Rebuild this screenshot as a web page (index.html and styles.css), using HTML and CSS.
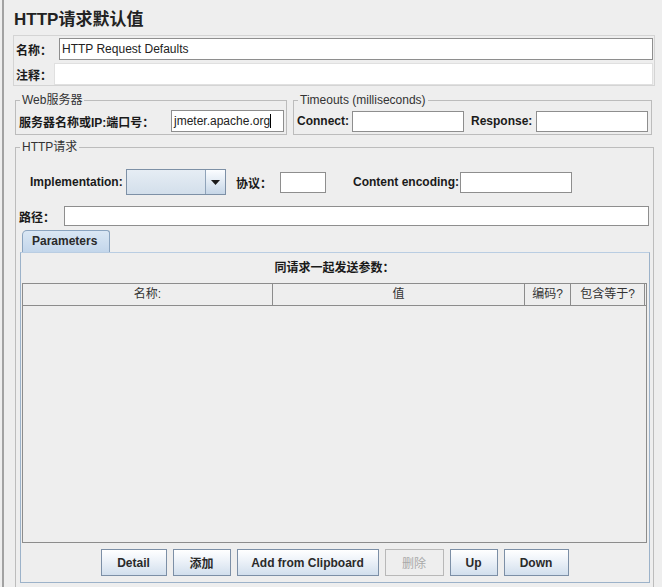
FILE: index.html
```html
<!DOCTYPE html>
<html>
<head>
<meta charset="utf-8">
<title>HTTP请求默认值</title>
<link rel="stylesheet" href="styles.css">
</head>
<body>
<div class="page">
  <h1 class="title">HTTP请求默认值</h1>
  <div class="namebox">
    <div class="row row-name"><span class="lbl lbl-name">名称：</span><div class="field grow">HTTP Request Defaults</div></div>
    <div class="row row-comment"><span class="lbl lbl-comment">注释：</span><div class="field field-flat grow"></div></div>
  </div>
  <div class="servers">
    <fieldset class="group group-web">
      <legend>Web服务器</legend>
      <div class="row row-field"><span class="lbl lbl-server">服务器名称或IP:端口号：</span><div class="field field-server"><span class="caret">jmeter.apache.org</span></div></div>
    </fieldset>
    <fieldset class="group group-timeouts">
      <legend>Timeouts (milliseconds)</legend>
      <div class="row row-field"><span class="lbl lbl-connect">Connect:</span><div class="field field-time"></div><span class="lbl lbl-response">Response:</span><div class="field field-time"></div></div>
    </fieldset>
  </div>
  <fieldset class="group group-http">
    <legend>HTTP请求</legend>
    <div class="row row-impl">
      <span class="lbl lbl-impl">Implementation:</span>
      <div class="combo"><div class="combo-value"></div><div class="combo-arrow"><svg width="9" height="5" viewBox="0 0 9 5"><path d="M0 0H9L4.5 5Z" fill="#1a1a1a"/></svg></div></div>
      <span class="lbl lbl-proto">协议：</span>
      <div class="field field-proto"></div>
      <span class="lbl lbl-enc">Content encoding:</span>
      <div class="field field-enc"></div>
    </div>
    <div class="row row-path"><span class="lbl lbl-path">路径：</span><div class="field grow field-path"></div></div>
    <div class="tabs">
      <div class="tab">Parameters</div>
      <div class="tabpanel">
        <div class="caption">同请求一起发送参数：</div>
        <div class="table">
          <div class="thead">
            <div class="th c1">名称:</div>
            <div class="th c2">值</div>
            <div class="th c3">编码?</div>
            <div class="th c4">包含等于?</div>
          </div>
          <div class="tbody"></div>
        </div>
        <div class="buttons">
          <button class="btn b-detail">Detail</button>
          <button class="btn b-add">添加</button>
          <button class="btn b-clip">Add from Clipboard</button>
          <button class="btn b-del" disabled>删除</button>
          <button class="btn b-up">Up</button>
          <button class="btn b-down">Down</button>
        </div>
      </div>
    </div>
  </fieldset>
</div>
</body>
</html>
```
FILE: styles.css
```css
* { box-sizing: border-box; }
html, body { margin: 0; padding: 0; }
body {
  background: #eeeeee;
  width: 662px;
  height: 587px;
  overflow: hidden;
  font: 12px "Liberation Sans", "Noto Sans CJK SC", sans-serif;
  color: #1e1e1e;
}
.page {
  margin-left: 2px;
  border-left: 2px solid #a2a2a2;
  padding: 0 7px 0 9px;
  height: 587px;
}
.title {
  margin: 0;
  padding: 6px 0 0 1px;
  height: 35px;
  font-size: 17px;
  line-height: 28px;
  font-weight: bold;
  color: #222;
}
.namebox {
  border: 1px solid #d4d4d4;
  height: 51px;
  padding: 2px 1px 0 2px;
}
.row { display: flex; align-items: center; }
.row-name { height: 22px; }
.row-comment { height: 22px; margin-top: 3px; }
.lbl { font-weight: bold; white-space: nowrap; flex: none; color: #1a1a1a; }
.lbl-name { width: 43px; }
.lbl-comment { width: 38px; }
.grow { flex: 1; }
.field {
  background: #ffffff;
  border: 1px solid #8e8e8e;
  height: 22px;
  padding-left: 2px;
  line-height: 20px;
  color: #222;
  white-space: nowrap;
  overflow: hidden;
  flex-shrink: 0;
}
.field.grow { flex: 1 1 auto; }
.field-flat { border-color: #e0e0e0; }

.servers {
  display: flex;
  gap: 6px;
  margin: 7px 3px 0 2px;
}
fieldset.group {
  border: 1px solid #bcbcbc;
  min-width: 0;
}
legend {
  padding: 0 2px;
  margin-left: 1px;
  font-size: 12px;
  line-height: 14px;
  color: #333;
}
.group-web { margin: 0; width: 272px; flex: none; padding: 3px 2px 2px 3px; }
.group-timeouts { margin: 0; flex: 1; padding: 3px 3px 2px 3px; }
.row-field { height: 22px; }
.lbl-server { width: 152px; }
.field-server { width: 113px; padding-left: 2px; }
.caret { border-right: 1px solid #000; padding-right: 0; }
.lbl-connect { width: 55px; }
.lbl-response { width: 65px; margin-left: 7px; }
.field-time { width: 112px; height: 21px; }

.group-http {
  margin: 5px 1px 0 2px;
  padding: 0;
  height: 470px;
}
.group-http legend { margin-left: 4px; }
.row-impl { margin: 15px 0 0 14px; height: 26px; }
.lbl-impl { width: 96px; }
.combo {
  display: flex;
  width: 100px;
  height: 26px;
  border: 1px solid #7d90a6;
  background: linear-gradient(#e6edf4, #d3dfeb);
  flex: none;
}
.combo-value { flex: 1; }
.combo-arrow {
  width: 20px;
  border-left: 1px solid #8fa3b9;
  background: linear-gradient(#fbfdff, #c6d6e7);
  display: flex;
  align-items: center;
  justify-content: center;
}
.lbl-proto { margin-left: 10px; width: 44px; }
.field-proto { width: 46px; height: 21px; }
.lbl-enc { margin-left: 27px; width: 107px; }
.field-enc { width: 112px; height: 21px; }
.row-path { margin: 11px 4px 0 3px; height: 20px; }
.lbl-path { width: 45px; }
.field-path { height: 20px; }

.tabs { margin: 4px 3px 0 4px; }
.tab {
  margin-left: 2px;
  width: 88px;
  height: 22px;
  border: 1px solid #8ba4bf;
  border-bottom: none;
  border-radius: 5px 3px 0 0;
  background: linear-gradient(#dae7f4, #c3d6eb);
  font-weight: bold;
  color: #2a2a2a;
  padding-left: 9px;
  line-height: 21px;
}
.tabpanel {
  border: 1px solid #9cb2c9;
  border-top-color: #b9cde2;
  height: 331px;
  padding: 0 2px 0 1px;
}
.caption {
  height: 30px;
  line-height: 30px;
  text-align: center;
  font-weight: bold;
  color: #1a1a1a;
}
.table {
  height: 260px;
  border: 1px solid #8c8c8c;
}
.thead { display: flex; height: 22px; border-bottom: 1px solid #8c8c8c; }
.th {
  border-right: 1px solid #8c8c8c;
  text-align: center;
  line-height: 21px;
  color: #333;
  flex: none;
}
.c1 { width: 250px; }
.c2 { width: 252px; }
.c3 { width: 46px; }
.c4 { width: 74px; }
.buttons {
  display: flex;
  justify-content: center;
  gap: 6px;
  margin-top: 6px;
}
.btn {
  height: 27px;
  margin: 0;
  padding: 0;
  border: 1px solid #7c8fa6;
  background: linear-gradient(#ffffff 0%, #eef3f9 40%, #d2dfed 100%);
  font: bold 12px "Liberation Sans", "Noto Sans CJK SC", sans-serif;
  color: #2a2a2a;
}
.b-detail { width: 66px; }
.b-add { width: 58px; }
.b-clip { width: 142px; }
.b-del { width: 59px; border-color: #b8b8b8; background: #eeeeee; color: #a9a9a9; font-weight: normal; }
.b-up { width: 48px; }
.b-down { width: 65px; }
```
